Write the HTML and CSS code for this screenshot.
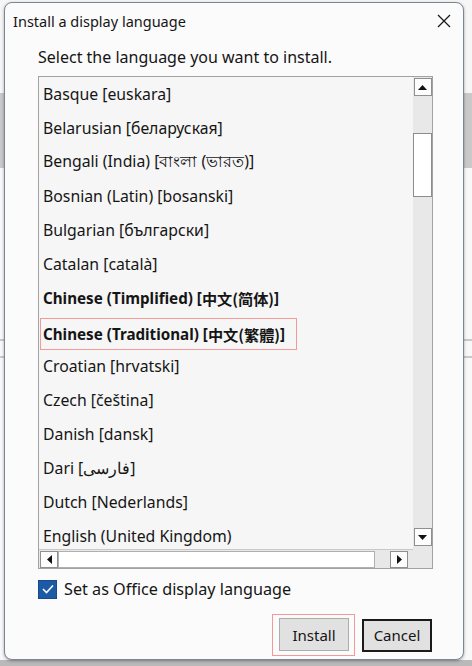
FILE: index.html
```html
<!DOCTYPE html>
<html lang="en">
<head>
<meta charset="utf-8">
<title>Install a display language</title>
<link rel="stylesheet" href="styles.css">
</head>
<body>
<div class="dialog">
  <div class="titlebar">
    <span class="title">Install a display language</span>
    <span class="close" aria-label="Close">
      <svg width="14" height="14" viewBox="0 0 14 14"><path d="M1 1 L13 13 M13 1 L1 13" stroke="#1a1a1a" stroke-width="1.3" fill="none"/></svg>
    </span>
  </div>
  <div class="content">
    <p class="prompt">Select the language you want to install.</p>
    <div class="listbox">
      <ul class="items">
        <li>Basque [euskara]</li>
        <li>Belarusian [беларуская]</li>
        <li>Bengali (India) [বাংলা (ভারত)]</li>
        <li>Bosnian (Latin) [bosanski]</li>
        <li>Bulgarian [български]</li>
        <li>Catalan [català]</li>
        <li class="bold">Chinese (Timplified) [<span class="sc">中文(简体)</span>]</li>
        <li class="bold"><span class="marked">Chinese (Traditional) [<span class="tc">中文(繁體)</span>]</span></li>
        <li>Croatian [hrvatski]</li>
        <li>Czech [čeština]</li>
        <li>Danish [dansk]</li>
        <li>Dari [<span dir="rtl">فارسی</span>]</li>
        <li>Dutch [Nederlands]</li>
        <li>English (United Kingdom)</li>
      </ul>
      <div class="vscroll">
        <span class="sbtn"><svg width="9" height="5" viewBox="0 0 9 5"><path d="M0 5 L4.5 0 L9 5Z" fill="#111"/></svg></span>
        <span class="vgap-top"></span>
        <span class="vthumb"></span>
        <span class="vgap"></span>
        <span class="sbtn"><svg width="9" height="5" viewBox="0 0 9 5"><path d="M0 0 L4.5 5 L9 0Z" fill="#111"/></svg></span>
      </div>
      <div class="hscroll">
        <span class="hbtn"><svg width="5" height="9" viewBox="0 0 5 9"><path d="M5 0 L0 4.5 L5 9Z" fill="#111"/></svg></span>
        <span class="hthumb"></span>
        <span class="htrack"></span>
        <span class="hbtn"><svg width="5" height="9" viewBox="0 0 5 9"><path d="M0 0 L5 4.5 L0 9Z" fill="#111"/></svg></span>
      </div>
    </div>
    <label class="check">
      <span class="box"><svg width="12" height="10" viewBox="0 0 12 10"><path d="M1 5 L4.5 8.5 L11 1.5" stroke="#fff" stroke-width="1.6" fill="none"/></svg></span>
      <span>Set as Office display language</span>
    </label>
    <div class="buttons">
      <span class="marker"><button class="btn">Install</button></span>
      <button class="btn default">Cancel</button>
    </div>
  </div>
</div>
</body>
</html>
```

FILE: styles.css
```css
* { box-sizing: border-box; }
html, body { margin: 0; height: 100%; }
body {
  width: 472px;
  height: 666px;
  padding: 2px 8px 6px 4px;
  overflow: hidden;
  font-family: "Noto Sans", "Open Sans", sans-serif;
  color: #151515;
  background:
    linear-gradient(#f6f6f6 0 93px, #c9c9c9 93px 168px, #f8f8f8 168px 339px, #c9c9c9 339px 341px, #f8f8f8 341px 356px, #c9c9c9 356px 358px, #f8f8f8 358px 660px, #b9b9b9 660px);
}
.dialog {
  width: 460px;
  height: 658px;
  background: #fbfbfb;
  border: 1px solid #7d8794;
  border-radius: 8px;
  box-shadow: 0 1px 3px rgba(0,0,0,0.35);
  display: flex;
  flex-direction: column;
}
.titlebar {
  height: 36px;
  flex: none;
  display: flex;
  align-items: center;
  justify-content: space-between;
  padding: 0 12px 0 8px;
}
.title { font-size: 14.5px; }
.close { display: flex; width: 14px; height: 14px; }
.content {
  padding: 0 31px 0 33px;
  display: flex;
  flex-direction: column;
}
.prompt {
  margin: 0;
  height: 37px;
  flex: none;
  font-size: 16px;
  line-height: 37px;
}
.listbox {
  width: 395px;
  height: 493px;
  flex: none;
  border: 1px solid #a3a3a3;
  background: #f6f6f6;
  display: grid;
  grid-template-columns: 374px 19px;
  grid-template-rows: 472px 19px;
}
.items {
  list-style: none;
  margin: 0;
  padding: 0;
  overflow: hidden;
  font-size: 15.8px;
}
.items li {
  height: 34px;
  display: flex;
  align-items: center;
  padding-left: 4px;
  white-space: nowrap;
}
.items li.bold { font-weight: 700; font-size: 15.2px; }
.sc { font-family: "Noto Sans CJK SC", sans-serif; }
.tc { font-family: "Noto Sans CJK TC", sans-serif; }
.marked {
  display: inline-flex;
  align-items: center;
  height: 32px;
  margin: 4px 0 0 -3px;
  padding: 0 11px 0 2px;
  border: 1px solid #f29a9a;
}
.vscroll {
  grid-row: 1 / 3;
  grid-column: 2;
  background: #e8e8e8;
  display: flex;
  flex-direction: column;
  align-items: center;
  padding-top: 1px;
}
.sbtn, .hbtn {
  width: 18px;
  height: 18px;
  background: #fdfdfd;
  border: 1px solid #8f8f8f;
  display: flex;
  align-items: center;
  justify-content: center;
  flex: none;
}
.vgap-top { height: 37px; flex: none; }
.vthumb {
  width: 19px;
  height: 64px;
  background: #fff;
  border: 1px solid #8c8c8c;
  flex: none;
}
.vgap { height: 331px; flex: none; }
.hscroll {
  grid-row: 2;
  grid-column: 1;
  background: #e8e8e8;
  display: flex;
  align-items: center;
  padding-left: 1px;
  border-top: 1px solid #c8c8c8;
}
.hbtn { width: 18px; height: 17px; }
.hthumb {
  width: 317px;
  height: 17px;
  background: #fff;
  border: 1px solid #b0b0b0;
  flex: none;
}
.htrack { width: 15px; flex: none; }
.check {
  display: flex;
  align-items: center;
  gap: 7px;
  margin-top: 9px;
  font-size: 16.2px;
}
.box {
  width: 19px;
  height: 19px;
  background: #1c5aa6;
  border: 1px solid #174a8a;
  display: flex;
  align-items: center;
  justify-content: center;
  flex: none;
}
.buttons {
  display: flex;
  justify-content: flex-end;
  align-items: center;
  gap: 7px;
  margin-top: 14px;
}
.marker {
  display: flex;
  padding: 3px 5px 4px 6px;
  border: 1px solid #f29a9a;
}
.btn {
  width: 70px;
  height: 33px;
  font-family: "Noto Sans", "Open Sans", sans-serif;
  font-size: 15px;
  color: #151515;
  background: #e1e1e1;
  border: 1px solid #adadad;
  padding: 0;
  margin: 0;
}
.btn.default { border: 2px solid #1a1a1a; }
```
